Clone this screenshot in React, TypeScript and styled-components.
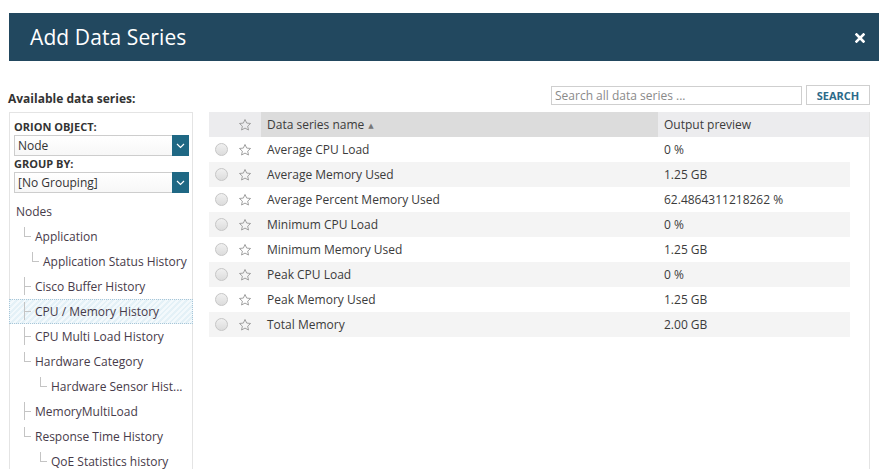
import React from 'react';
import styled, { createGlobalStyle } from 'styled-components';

const GlobalStyle = createGlobalStyle`
	body {
		margin: 0;
		font-family: "Open Sans", "DejaVu Sans", sans-serif;
		color: #3b3b3b;
		background: #fff;
	}
`;

const Page = styled.div`
	padding: 13px 5px 0 9px;
	height: 456px;
	overflow: hidden;
	display: flex;
	flex-direction: column;
`;

const TitleBar = styled.div`
	height: 48px;
	background: #22485f;
	display: flex;
	align-items: center;
	justify-content: space-between;
	padding: 0 14px 0 21px;
	flex-shrink: 0;

	h1 {
		margin: 0;
		font-size: 21px;
		font-weight: 400;
		color: #fff;
		letter-spacing: 0.1px;
	}
`;

const Close = styled.span`
	display: flex;
	margin-top: 2px;
`;

const Content = styled.div`
	width: 861px;
	display: flex;
	flex-direction: column;
	flex: 1;
	min-height: 0;
`;

const Toolbar = styled.div`
	display: flex;
	align-items: center;
	justify-content: space-between;
	margin-top: 24px;
	height: 20px;
`;

const Label = styled.div`
	font-size: 12px;
	font-weight: 700;
	color: #333;
	margin: 7px 0 0 -1px;
`;

const SearchBox = styled.div`
	display: flex;
	align-items: center;
	gap: 4px;
`;

const SearchInput = styled.input`
	width: 251px;
	height: 19px;
	box-sizing: border-box;
	border: 1px solid #cfcfcf;
	padding: 0 3px;
	font-family: "Open Sans", sans-serif;
	font-size: 12px;
	color: #333;
	outline: none;

	&::placeholder {
		color: #8a8a8a;
	}
`;

const SearchButton = styled.button`
	width: 64px;
	height: 20px;
	box-sizing: border-box;
	border: 1px solid #cfcfcf;
	background: #fff;
	font-family: "Open Sans", sans-serif;
	font-size: 11px;
	font-weight: 700;
	color: #2c6a89;
	padding: 0;
`;

const Main = styled.div`
	display: flex;
	gap: 16px;
	margin-top: 7px;
	flex: 1;
	min-height: 0;
`;

const SidePanel = styled.div`
	width: 184px;
	box-sizing: border-box;
	border: 1px solid #e4e4e4;
	border-bottom: none;
	padding-top: 7px;
	flex-shrink: 0;
`;

const FieldLabel = styled.div`
	font-size: 11px;
	font-weight: 700;
	color: #333;
	padding-left: 4px;
	line-height: 14px;
`;

const Select = styled.div`
	margin: 1px 0 1px 4px;
	width: 175px;
	height: 21px;
	box-sizing: border-box;
	border: 1px solid #cdcdcd;
	display: flex;
	align-items: stretch;
	font-size: 12px;
	color: #333;
	background: linear-gradient(#fff, #f7f7f7);

	span {
		flex: 1;
		padding-left: 3px;
		line-height: 19px;
	}
`;

const SelectArrow = styled.div`
	width: 17px;
	background: #1f6884;
	display: flex;
	align-items: center;
	justify-content: center;
	margin: -1px -1px -1px 0;
`;

const Tree = styled.div`
	margin-top: 6px;
`;

const TreeRow = styled.div<{ $indent: number; $selected?: boolean }>`
	height: 25px;
	line-height: 25px;
	box-sizing: border-box;
	display: flex;
	align-items: center;
	font-size: 12px;
	color: #473b4a;
	white-space: nowrap;
	padding-left: ${(p) => p.$indent}px;
	border: 1px dotted ${(p) => (p.$selected ? '#a8c6d8' : 'transparent')};
	margin: 0 -1px;
	background: ${(p) =>
		p.$selected
			? 'repeating-linear-gradient(135deg, #e4f1f7 0 2px, #f3f9fc 2px 4px)'
			: 'transparent'};
`;

const Connector = styled.span<{ $last: boolean }>`
	position: relative;
	width: 11px;
	height: 25px;
	flex-shrink: 0;

	&::before {
		content: '';
		position: absolute;
		left: 0;
		top: 3px;
		height: ${(p) => (p.$last ? '9px' : '18px')};
		border-left: 1px solid #c4c4c4;
	}
	&::after {
		content: '';
		position: absolute;
		left: 0;
		top: 12px;
		width: 7px;
		border-top: 1px solid #c4c4c4;
	}
`;

const Grid = styled.div`
	flex: 1;
	border-right: 1px solid #e4e4e4;
	display: flex;
	flex-direction: column;
`;

const HeaderRow = styled.div`
	display: flex;
	height: 25px;
	background: #ececee;
	font-size: 12px;
	color: #3b3b3b;
`;

const Row = styled.div<{ $alt: boolean }>`
	display: flex;
	height: 25px;
	margin-right: 19px;
	background: ${(p) => (p.$alt ? '#f4f4f4' : '#fff')};
	font-size: 12px;
	color: #3b3b3b;
`;

const Cell = styled.div<{ $width?: number; $bg?: string }>`
	${(p) => (p.$width ? `width: ${p.$width}px; flex-shrink: 0;` : 'flex: 1;')}
	display: flex;
	align-items: center;
	box-sizing: border-box;
	background: ${(p) => p.$bg || 'transparent'};
	white-space: nowrap;
`;

const TextCell = styled(Cell)`
	padding-left: 6px;
`;

const RadioCell = styled(Cell)`
	padding-left: 6px;
`;

const StarCell = styled(Cell)`
	padding-left: 5px;
`;

const Radio = styled.span`
	width: 11px;
	height: 11px;
	border-radius: 50%;
	border: 1px solid #c6c6c6;
	background: linear-gradient(#f0f0f0, #dcdcdc);
`;

const SortArrow = styled.span`
	font-size: 7px;
	color: #777;
	margin-left: 4px;
	margin-top: 1px;
`;

const Star = () => (
	<svg width="14" height="14" viewBox="0 0 24 24" fill="none" stroke="#9a9a9a" strokeWidth="1.6" strokeLinejoin="round">
		<path d="M12 2.5l2.9 6.2 6.7.7-5 4.6 1.4 6.6L12 17.3l-5.9 3.3 1.4-6.6-5-4.6 6.7-.7z" />
	</svg>
);

const Chevron = () => (
	<svg width="9" height="6" viewBox="0 0 9 6" fill="none" stroke="#fff" strokeWidth="1.2">
		<path d="M1 1l3.5 3.5L8 1" />
	</svg>
);

const CloseIcon = () => (
	<svg width="10" height="10" viewBox="0 0 10 10" stroke="#fff" strokeWidth="2.6" strokeLinecap="square">
		<path d="M1.5 1.5l7 7M8.5 1.5l-7 7" />
	</svg>
);

const treeItems: { label: string; indent: number; line?: 'mid' | 'last'; selected?: boolean }[] = [
	{ label: 'Nodes', indent: 6 },
	{ label: 'Application', indent: 14, line: 'last' },
	{ label: 'Application Status History', indent: 22, line: 'last' },
	{ label: 'Cisco Buffer History', indent: 14, line: 'mid' },
	{ label: 'CPU / Memory History', indent: 14, line: 'mid', selected: true },
	{ label: 'CPU Multi Load History', indent: 14, line: 'mid' },
	{ label: 'Hardware Category', indent: 14, line: 'last' },
	{ label: 'Hardware Sensor Hist...', indent: 30, line: 'last' },
	{ label: 'MemoryMultiLoad', indent: 14, line: 'mid' },
	{ label: 'Response Time History', indent: 14, line: 'last' },
	{ label: 'QoE Statistics history', indent: 30, line: 'last' },
];

const series: [string, string][] = [
	['Average CPU Load', '0 %'],
	['Average Memory Used', '1.25 GB'],
	['Average Percent Memory Used', '62.4864311218262 %'],
	['Minimum CPU Load', '0 %'],
	['Minimum Memory Used', '1.25 GB'],
	['Peak CPU Load', '0 %'],
	['Peak Memory Used', '1.25 GB'],
	['Total Memory', '2.00 GB'],
];

const App: React.FC = () => {
	return (
		<>
			<GlobalStyle />
			<Page>
				<TitleBar>
					<h1>Add Data Series</h1>
					<Close>
						<CloseIcon />
					</Close>
				</TitleBar>
				<Content>
					<Toolbar>
						<Label>Available data series:</Label>
						<SearchBox>
							<SearchInput placeholder="Search all data series ..." />
							<SearchButton>SEARCH</SearchButton>
						</SearchBox>
					</Toolbar>
					<Main>
						<SidePanel>
							<FieldLabel>ORION OBJECT:</FieldLabel>
							<Select>
								<span>Node</span>
								<SelectArrow>
									<Chevron />
								</SelectArrow>
							</Select>
							<FieldLabel>GROUP BY:</FieldLabel>
							<Select>
								<span>[No Grouping]</span>
								<SelectArrow>
									<Chevron />
								</SelectArrow>
							</Select>
							<Tree>
								{treeItems.map((t) => (
									<TreeRow key={t.label} $indent={t.indent} $selected={t.selected}>
										{t.line && <Connector $last={t.line === 'last'} />}
										{t.label}
									</TreeRow>
								))}
							</Tree>
						</SidePanel>
						<Grid>
							<HeaderRow>
								<Cell $width={24} />
								<StarCell $width={28}>
									<Star />
								</StarCell>
								<TextCell $width={397} $bg="#dcdcdc">
									Data series name
									<SortArrow>▲</SortArrow>
								</TextCell>
								<TextCell>Output preview</TextCell>
							</HeaderRow>
							{series.map(([name, value], i) => (
								<Row key={name} $alt={i % 2 === 1}>
									<RadioCell $width={24}>
										<Radio />
									</RadioCell>
									<StarCell $width={28}>
										<Star />
									</StarCell>
									<TextCell $width={397}>{name}</TextCell>
									<TextCell>{value}</TextCell>
								</Row>
							))}
						</Grid>
					</Main>
				</Content>
			</Page>
		</>
	);
};

export default App;
